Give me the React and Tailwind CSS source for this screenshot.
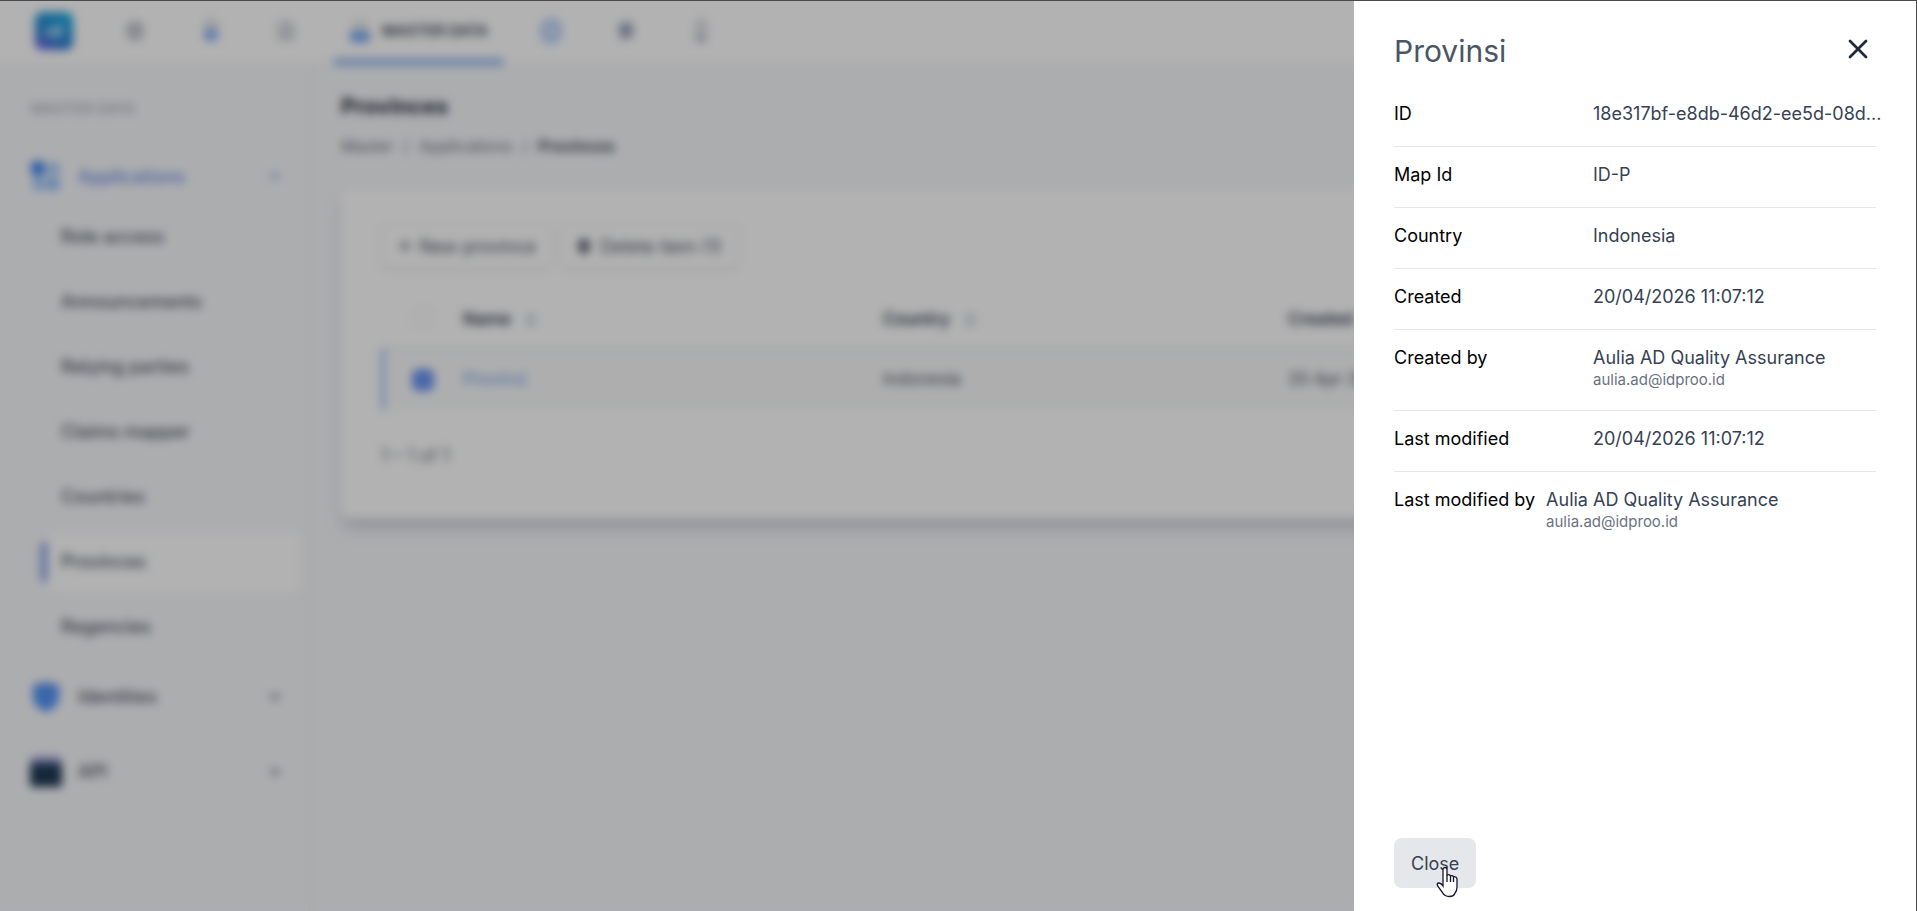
import { useState } from 'react';
import { ChevronDown, ChevronUp, ChevronsUpDown, FileText, Plus, Shield, Trash2, X } from 'lucide-react';

const subItems = ['Role access', 'Announcements', 'Relying parties', 'Claims mapper', 'Countries', 'Provinces', 'Regencies'];

const details = [
  { label: 'ID', value: '18e317bf-e8db-46d2-ee5d-08d...' },
  { label: 'Map Id', value: 'ID-P' },
  { label: 'Country', value: 'Indonesia' },
  { label: 'Created', value: '20/04/2026 11:07:12' },
  { label: 'Created by', value: 'Aulia AD Quality Assurance', email: 'aulia.ad@idproo.id' },
  { label: 'Last modified', value: '20/04/2026 11:07:12' },
  { label: 'Last modified by', value: 'Aulia AD Quality Assurance', email: 'aulia.ad@idproo.id' },
];

function Logo() {
  return (
    <svg viewBox="0 0 38 38" className="size-9.5">
      <defs>
        <linearGradient id="logo" x1="0.1" y1="1" x2="0.6" y2="0">
          <stop offset="0" stopColor="#7a62e6" />
          <stop offset="0.4" stopColor="#2c80cf" />
          <stop offset="1" stopColor="#1ba6e4" />
        </linearGradient>
      </defs>
      <rect width="38" height="38" rx="7" fill="url(#logo)" />
      <path d="M12 16v8M25 13v11M25 20a4 4 0 1 0-8 0 4 4 0 0 0 8 0" stroke="#d5efff" strokeWidth="3" fill="none" />
    </svg>
  );
}

function AppsIcon() {
  return (
    <svg viewBox="0 0 32 32" className="size-8">
      <rect x="1" y="1" width="14" height="15" rx="5" fill="#3f84f2" />
      <rect x="18" y="3" width="11" height="12" rx="3" fill="#9cc4f8" />
      <rect x="3" y="18" width="12" height="12" rx="3" fill="#9cc4f8" />
      <rect x="17" y="18" width="12" height="12" rx="3" fill="#8ab9f6" />
    </svg>
  );
}

function ApiIcon() {
  return (
    <svg viewBox="0 0 32 32" className="size-8">
      <rect x="1" y="0" width="30" height="12" rx="3" fill="#a9a5e0" />
      <rect x="0" y="7" width="32" height="24" rx="3" fill="#1f3a55" />
    </svg>
  );
}

function LockIcon() {
  return (
    <svg viewBox="0 0 20 24" className="h-6 w-5">
      <path d="M5 11V7a5 5 0 0 1 10 0v4" stroke="#b9bfca" strokeWidth="3" fill="none" />
      <rect x="3" y="10" width="14" height="12" rx="5" fill="#86b1f6" />
    </svg>
  );
}

function DataIcon() {
  return (
    <svg viewBox="0 0 24 24" className="size-6">
      <path d="M7 13V8a5 5 0 0 1 10 0v5" stroke="#c5cad3" strokeWidth="3" fill="none" />
      <rect x="2" y="12" width="20" height="11" rx="3" fill="#7aa8f2" />
    </svg>
  );
}

function ClockIcon() {
  return (
    <svg viewBox="0 0 24 26" className="h-7 w-6">
      <rect x="3" y="2" width="18" height="22" rx="9" fill="#cfe0fa" stroke="#9cc0f7" strokeWidth="3" />
    </svg>
  );
}

function DeviceIcon() {
  return (
    <svg viewBox="0 0 14 24" className="h-6 w-3.5">
      <rect x="3" y="2" width="8" height="20" rx="2" fill="#eef0f4" stroke="#b4b8c2" strokeWidth="2" />
      <rect x="3" y="17" width="8" height="5" rx="2" fill="#a9adb8" />
    </svg>
  );
}

function Header() {
  return (
    <header className="flex h-[62px] shrink-0 items-center bg-white pl-[35px]">
      <a href="#home" aria-label="Home" className="mr-11"><Logo /></a>
      <nav className="flex h-full items-center">
        <a href="#security" aria-label="Security" className="flex w-9 justify-center"><Shield className="size-5 fill-gray-300 text-gray-400" strokeWidth={3} /></a>
        <a href="#access" aria-label="Access" className="ml-10 flex w-9 justify-center"><LockIcon /></a>
        <a href="#documents" aria-label="Documents" className="ml-[39px] flex w-9 justify-center"><FileText className="size-5 text-gray-400" /></a>
        <a href="#master" className="relative ml-[29px] flex h-full w-[171px] items-center gap-2.5 pl-[15px] font-semibold text-gray-700">
          <DataIcon />
          <span className="text-[15px] whitespace-nowrap">MASTER DATA</span>
          <span className="absolute inset-x-0 -bottom-1 h-2 rounded bg-[#a0bff0]" />
        </a>
        <a href="#history" aria-label="History" className="ml-[29px] flex w-9 justify-center"><ClockIcon /></a>
        <a href="#settings" aria-label="Settings" className="ml-[39px] flex w-9 justify-center">
          <svg viewBox="0 0 20 24" className="h-6 w-5"><rect x="3" y="3" width="14" height="17" rx="6" fill="#9aa4bf" /></svg>
        </a>
        <a href="#devices" aria-label="Devices" className="ml-[39px] flex w-9 justify-center"><DeviceIcon /></a>
      </nav>
    </header>
  );
}

function Sidebar() {
  return (
    <aside className="w-[310px] shrink-0 border-r border-gray-200 pt-[37px] pr-2">
      <p className="pl-[31px] text-[15px] leading-5 text-gray-400">MASTER DATA</p>
      <nav className="mt-[25px] text-[18px] font-medium text-gray-600">
        <button type="button" className="flex h-16 w-full items-center pr-[18px] pl-[30px] text-[#6c8ce8]">
          <AppsIcon />
          <span className="ml-4 flex-1 text-left">Applications</span>
          <ChevronUp className="size-4" strokeWidth={3} />
        </button>
        <ul className="-mt-1">
          {subItems.map((item) => (
            <li key={item} className="flex h-[65px] items-center pl-[41px]">
              <span className={item === 'Provinces' ? 'h-10 w-1.5 rounded bg-[#7896e6]' : 'w-1.5'} />
              <a href="#item" className={`flex h-[60px] flex-1 items-center rounded-lg pl-3.5 ${item === 'Provinces' ? 'bg-white' : ''}`}>{item}</a>
            </li>
          ))}
        </ul>
        <button type="button" className="flex h-[75px] w-full items-center pr-[18px] pl-[30px]">
          <svg viewBox="0 0 32 32" className="size-8"><path d="M16 1 29 4v12q0 10-13 15Q3 26 3 16V4Z" fill="#5593f5" /></svg>
          <span className="ml-4 flex-1 text-left">Identities</span>
          <ChevronDown className="size-4" strokeWidth={3} />
        </button>
        <button type="button" className="flex h-[75px] w-full items-center pr-[18px] pl-[30px]">
          <ApiIcon />
          <span className="ml-4 flex-1 text-left">API</span>
          <ChevronDown className="size-4" strokeWidth={3} />
        </button>
      </nav>
    </aside>
  );
}

function SortHeader({ children }) {
  return (
    <th className="pt-1.5 text-left font-semibold text-gray-700">
      <button type="button" className="flex items-center gap-3">{children}<ChevronsUpDown className="size-4 text-gray-400" strokeWidth={3} /></button>
    </th>
  );
}

function ProvinceList() {
  return (
    <main className="min-w-0 flex-1 pt-7 pr-10 pl-[31px]">
      <h1 className="text-[22px] leading-8 font-bold text-gray-800">Provinces</h1>
      <div className="mt-3 flex gap-2.5 text-base text-gray-500">
        <span>Master</span><span>/</span><span>Applications</span><span>/</span>
        <span className="font-semibold text-gray-700">Provinces</span>
      </div>
      <section className="mt-[31px] h-[330px] rounded-lg bg-white px-10 pt-[34px] shadow-lg shadow-gray-400/50">
        <div className="flex gap-2 text-[18px] text-gray-600">
          <button type="button" className="flex h-[46px] items-center gap-1.5 rounded-md border border-gray-200 px-[15px] shadow-sm"><Plus className="size-4" strokeWidth={3} />New province</button>
          <button type="button" className="flex h-[46px] items-center gap-2 rounded-md border border-gray-200 px-[15px] shadow-sm"><Trash2 className="size-4 fill-gray-500" />Delete item (1)</button>
        </div>
        <table className="mt-4 w-full table-fixed text-[17px] text-gray-600">
          <colgroup>
            <col className="w-[80px]" />
            <col className="w-[420px]" />
            <col className="w-[405px]" />
            <col />
          </colgroup>
          <thead>
            <tr className="h-16 border-b-2 border-gray-200">
              <th className="pt-2 pl-[30px] text-left"><input type="checkbox" aria-label="Select all" className="size-5 appearance-none rounded border border-gray-200" /></th>
              <SortHeader>Name</SortHeader>
              <SortHeader>Country</SortHeader>
              <SortHeader>Created</SortHeader>
            </tr>
          </thead>
          <tbody>
            <tr className="h-[61px] bg-gray-50">
              <td className="border-l-4 border-[#a4bbf5] pt-2 pl-[27px]"><input type="checkbox" aria-label="Select Provinsi" defaultChecked className="size-[22px] appearance-none rounded-md bg-[#6b94f2]" /></td>
              <td><a href="#provinsi" className="text-[#6d9fe8]">Provinsi</a></td>
              <td>Indonesia</td>
              <td>20 Apr 2026</td>
            </tr>
          </tbody>
        </table>
        <p className="mt-8 text-[18px] leading-7 text-gray-500">1 – 1 of 1</p>
      </section>
    </main>
  );
}

function HandCursor() {
  return (
    <svg viewBox="0 0 22 32" className="pointer-events-none absolute top-7 left-[42px] h-8 w-[22px]">
      <path d="M7 19V3.500a2 2 0 0 1 4 0V9q2-1 3.500.8 2-.6 3 .9 3-.4 3.500 2V21q0 4-2 6-1 3.500-5.500 3.500-5 0-7-4L2 20.500Q0 17 3 17q2 0 4 3Z" fill="#fff" stroke="#14142b" strokeWidth="1.300" />
      <path d="M11 9v7M14.500 10V16M17.500 11V16" stroke="#14142b" strokeWidth="1.300" />
    </svg>
  );
}

function DetailDrawer({ onClose }) {
  return (
    <div role="dialog" aria-labelledby="drawer-title" className="fixed top-px right-px bottom-0 flex w-[562px] flex-col bg-white px-10 pt-7">
      <div className="flex items-start justify-between">
        <h2 id="drawer-title" className="text-[30px] leading-11 text-gray-600">Provinsi</h2>
        <button type="button" aria-label="Close panel" onClick={onClose} className="mt-1 mr-0.5 text-gray-800"><X className="size-8" strokeWidth={2} /></button>
      </div>
      <dl className="mt-[13px] text-[18px] leading-6">
        {details.map(({ label, value, email }) => (
          <div key={label} className="flex border-b border-gray-200 pt-4 pb-5 last:border-b-0">
            <dt className={label === 'Last modified by' ? 'mr-[11px] shrink-0 text-black' : 'w-[199px] shrink-0 text-black'}>{label}</dt>
            <dd className="min-w-0 flex-1 text-gray-700">
              <div className="whitespace-nowrap">{value}</div>
              {email && <div className="text-[15px] leading-5 text-gray-500">{email}</div>}
            </dd>
          </div>
        ))}
      </dl>
      <div className="mt-auto pb-[23px]">
        <button type="button" onClick={onClose} className="relative flex h-[50px] items-center rounded-lg bg-gray-200 px-[17px] text-[18px] text-gray-700">
          Close
          <HandCursor />
        </button>
      </div>
    </div>
  );
}

export default function App() {
  const [open, setOpen] = useState(true);

  return (
    <div className="flex h-screen flex-col overflow-hidden bg-[#f7f8fb] font-['Inter',sans-serif]">
      <Header />
      <div className="flex min-h-0 flex-1">
        <Sidebar />
        <ProvinceList />
      </div>
      {open && (
        <>
          <div className="fixed inset-0 bg-black/30 backdrop-blur-[5px]" onClick={() => setOpen(false)} />
          <DetailDrawer onClose={() => setOpen(false)} />
        </>
      )}
      <div className="pointer-events-none fixed inset-0 border-t border-r border-[#4a4a4c]" />
    </div>
  );
}
